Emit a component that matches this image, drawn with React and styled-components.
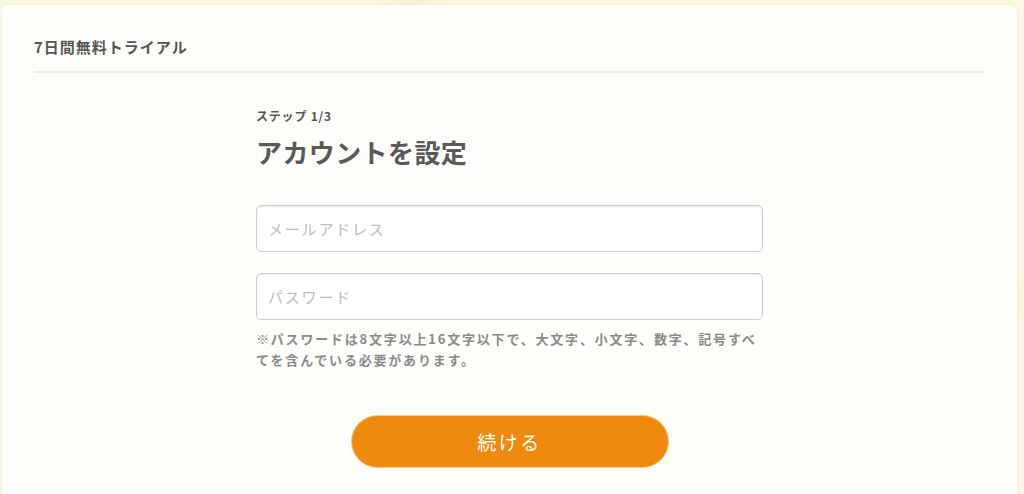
import React from "react";
import styled, { createGlobalStyle } from "styled-components";

const GlobalStyle = createGlobalStyle`
  html, body {
    margin: 0;
    padding: 0;
    background: #fcf7e2;
    font-family: "Noto Sans CJK JP", "Noto Sans", sans-serif;
    overflow: hidden;
  }
`;

const App = () => {
  return (
    <>
      <GlobalStyle />
      <Page>
        <Card>
          <Header>
            <h2>7日間無料トライアル</h2>
          </Header>
          <Form>
            <Step>ステップ 1/3</Step>
            <Title>アカウントを設定</Title>
            <Input type="email" placeholder="メールアドレス" />
            <Input type="password" placeholder="パスワード" />
            <Note>
              ※パスワードは8文字以上16文字以下で、大文字、小文字、数字、記号すべてを含んでいる必要があります。
            </Note>
            <Actions>
              <Button>続ける</Button>
            </Actions>
          </Form>
        </Card>
      </Page>
    </>
  );
};

const Page = styled.div`
  height: 494px;
  padding: 5px 7px 0 2px;
  box-sizing: border-box;
  background: radial-gradient(circle at 40% 0%, #f9f0d2 0, transparent 40px),
    radial-gradient(circle at 98% 60%, #f9efcf 0, transparent 30px), #fcf7e2;
`;

const Card = styled.div`
  background: #fefefb;
  border-radius: 6px 6px 0 0;
  height: 100%;
  padding: 0 32px;
  box-shadow: 0 0 2px rgba(200, 180, 120, 0.25);
`;

const Header = styled.div`
  padding: 34px 0 16px;
  border-bottom: 2px solid #ececea;
  h2 {
    margin: 0;
    font-size: 15px;
    line-height: 16px;
    letter-spacing: 1px;
    font-weight: 700;
    color: #555;
  }
`;

const Form = styled.div`
  width: 507px;
  margin: 0 auto;
  padding-top: 35px;
  display: flex;
  flex-direction: column;
`;

const Step = styled.div`
  font-size: 12px;
  line-height: 16px;
  letter-spacing: 0.8px;
  font-weight: 700;
  color: #555;
`;

const Title = styled.h1`
  margin: 10px 0 0;
  font-size: 26px;
  line-height: 36px;
  letter-spacing: 0.4px;
  font-weight: 700;
  color: #595959;
`;

const Input = styled.input`
  box-sizing: border-box;
  width: 100%;
  height: 47px;
  margin-top: 21px;
  padding: 0 11px;
  border: 1px solid #cfcfcf;
  border-radius: 5px;
  box-shadow: inset 0 1px 2px rgba(0, 0, 0, 0.1);
  background: #fff;
  font-family: inherit;
  font-size: 15px;
  letter-spacing: 1.8px;
  color: #555;
  outline: none;
  &:first-of-type {
    margin-top: 35px;
  }
  &::placeholder {
    color: #bdbdbd;
  }
`;

const Note = styled.p`
  margin: 8px 0 0;
  font-size: 13px;
  line-height: 21px;
  letter-spacing: 1.8px;
  font-weight: 700;
  color: #8a8a8a;
`;

const Actions = styled.div`
  display: flex;
  justify-content: center;
  margin-top: 45px;
`;

const Button = styled.button`
  width: 318px;
  height: 53px;
  border: 1px solid #f3c98a;
  border-radius: 27px;
  background: #f08a0e;
  color: #fff;
  font-family: inherit;
  font-size: 19px;
  letter-spacing: 2.5px;
  cursor: pointer;
`;

export default App;
